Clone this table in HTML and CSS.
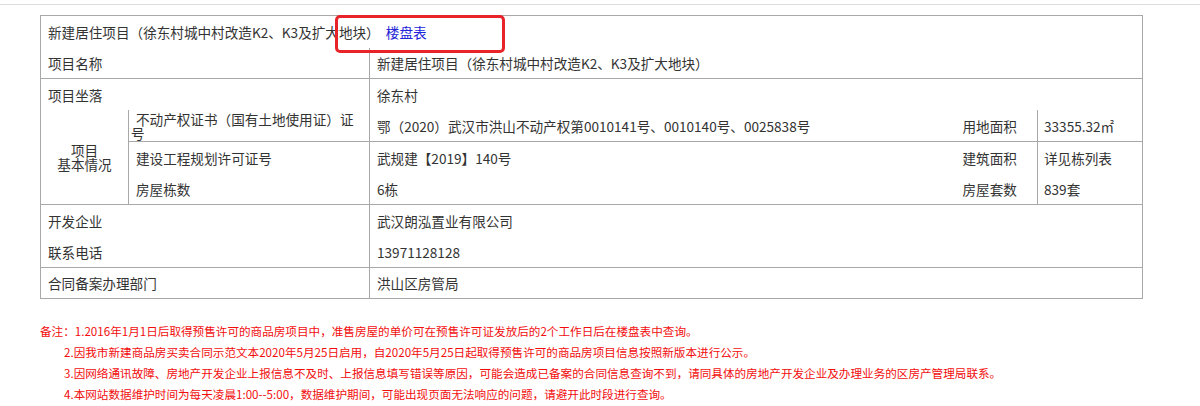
FILE: index.html
```html
<!DOCTYPE html>
<html lang="zh-CN">
<head>
<meta charset="utf-8">
<title>楼盘信息</title>
<link rel="stylesheet" href="styles.css">
</head>
<body>
<div class="page">
  <div class="topline"></div>
  <table class="info">
    <colgroup>
      <col class="c1"><col class="c2"><col class="c3"><col class="c4"><col class="c5">
    </colgroup>
    <tr class="r-title">
      <td colspan="5" class="title">新建居住项目（徐东村城中村改造K2、K3及扩大地块）&nbsp;&nbsp;<a class="link" href="#">楼盘表</a></td>
    </tr>
    <tr class="r-short">
      <td colspan="2" class="bb">项目名称</td>
      <td colspan="3" class="bl bb">新建居住项目（徐东村城中村改造K2、K3及扩大地块）</td>
    </tr>
    <tr class="r-tall">
      <td colspan="2">项目坐落</td>
      <td colspan="3" class="bl">徐东村</td>
    </tr>
    <tr class="r-tall">
      <td rowspan="3" class="group bb"><span class="gl">项目</span><span class="gl">基本情况</span></td>
      <td class="sub bl bb">不动产权证书（国有土地使用证）证号</td>
      <td class="bl bb">鄂（2020）武汉市洪山不动产权第0010141号、0010140号、0025838号</td>
      <td class="bb">用地面积</td>
      <td class="bl bb val5">33355.32㎡</td>
    </tr>
    <tr class="r-tall">
      <td class="sub bl">建设工程规划许可证号</td>
      <td class="bl">武规建【2019】140号</td>
      <td>建筑面积</td>
      <td class="bl val5">详见栋列表</td>
    </tr>
    <tr class="r-tall">
      <td class="sub bl bb">房屋栋数</td>
      <td class="bl bb">6栋</td>
      <td class="bb">房屋套数</td>
      <td class="bl bb val5">839套</td>
    </tr>
    <tr class="r-tall">
      <td colspan="2">开发企业</td>
      <td colspan="3" class="bl">武汉朗泓置业有限公司</td>
    </tr>
    <tr class="r-tall">
      <td colspan="2" class="bb">联系电话</td>
      <td colspan="3" class="bl bb">13971128128</td>
    </tr>
    <tr class="r-short">
      <td colspan="2">合同备案办理部门</td>
      <td colspan="3" class="bl">洪山区房管局</td>
    </tr>
  </table>
  <div class="notes">
    <p class="first">备注：1.2016年1月1日后取得预售许可的商品房项目中，准售房屋的单价可在预售许可证发放后的2个工作日后在楼盘表中查询。</p>
    <p>2.因我市新建商品房买卖合同示范文本2020年5月25日启用，自2020年5月25日起取得预售许可的商品房项目信息按照新版本进行公示。</p>
    <p>3.因网络通讯故障、房地产开发企业上报信息不及时、上报信息填写错误等原因，可能会造成已备案的合同信息查询不到，请同具体的房地产开发企业及办理业务的区房产管理局联系。</p>
    <p>4.本网站数据维护时间为每天凌晨1:00--5:00，数据维护期间，可能出现页面无法响应的问题，请避开此时段进行查询。</p>
  </div>
  <div class="highlight"></div>
</div>
</body>
</html>
```

FILE: styles.css
```css
html, body {
  margin: 0;
  padding: 0;
  background: #fff;
}
body {
  font-family: "Noto Sans CJK SC", "Noto Sans", sans-serif;
  color: #333;
  overflow: hidden;
}
.page {
  position: relative;
  width: 1200px;
  height: 406px;
}
.topline {
  height: 4px;
  border-bottom: 1px solid #dcdcdc;
}
.info {
  margin: 10px 0 0 40px;
  width: 1102px;
  table-layout: fixed;
  border-collapse: collapse;
  border: 1px solid #a8a8a8;
  font-size: 13.6px;
  line-height: 14px;
}
.c1 { width: 88px; }
.c2 { width: 241px; }
.c3 { width: 586px; }
.c4 { width: 82px; }
.c5 { width: 105px; }
.info td {
  padding: 0 7px;
  vertical-align: middle;
  white-space: normal;
}
.r-title td { height: 32px; }
.r-short td { height: 30px; }
.r-tall td { height: 31px; }
.info td.bl { border-left: 1px solid #a8a8a8; }
.info td.bb { border-bottom: 1px solid #a8a8a8; }
.info td.group {
  text-align: center;
  padding: 0;
}
.gl {
  display: block;
  line-height: 14px;
}
.info td.sub {
  padding-left: 2px;
  text-indent: 5px;
}
.info td.val5 { padding-left: 6px; }
.link {
  color: #2323d8;
  text-decoration: none;
}
.notes {
  margin: 22px 0 0 40px;
  color: #f20d0d;
  font-size: 11.6px;
  line-height: 21px;
  padding-left: 24px;
}
.notes p {
  margin: 0;
  white-space: nowrap;
}
.notes p.first {
  margin-left: -24px;
}
.highlight {
  position: absolute;
  left: 335px;
  top: 15px;
  width: 164px;
  height: 32px;
  border: 3px solid #e8232a;
  border-radius: 5px;
}
```
